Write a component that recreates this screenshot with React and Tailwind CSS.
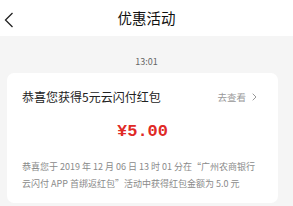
import React from 'react';

const cjk = { fontFamily: '"Noto Sans CJK SC", "Noto Sans", sans-serif' };

const App = () => {
  return (
    <div className="w-[293px] h-[206px] overflow-hidden bg-[#f5f5f5]" style={cjk}>
      {/* header */}
      <div className="relative h-9 bg-white flex items-center justify-center">
        <svg className="absolute left-[4px] top-[12px]" width="10" height="16" viewBox="0 0 10 16">
          <polyline points="8.5,1 1.5,8 8.5,15" fill="none" stroke="#222" strokeWidth="1.3" />
        </svg>
        <h1 className="text-[14.5px] leading-none text-[#111] pt-[1px]">优惠活动</h1>
      </div>

      <div className="pt-[19px] text-center text-[9px] leading-[14px] text-[#666]">13:01</div>

      <div className="ml-[7px] w-[271px] mt-[4px] bg-white rounded-[7px] px-[15px] pt-[16px] pb-[11px]">
        <div className="flex items-center justify-between h-4">
          <span className="text-[12px] leading-4 text-[#222]">恭喜您获得5元云闪付红包</span>
          <span className="flex items-center gap-[6px] text-[9.5px] text-[#999] pr-[6px]">
            去查看
            <svg width="5" height="8" viewBox="0 0 5 8">
              <polyline points="0.7,0.7 4,4 0.7,7.3" fill="none" stroke="#999" strokeWidth="1" />
            </svg>
          </span>
        </div>

        <div
          className="mt-[17px] text-center text-[17px] leading-5 font-bold text-[#e02a26]"
          style={{ fontFamily: '"Liberation Mono", monospace' }}
        >
          ¥5.00
        </div>

        <div className="mt-[16px] text-[9px] leading-[17px] text-[#8a8a8a]">
          <div className="whitespace-nowrap">恭喜您于 2019 年 12 月 06 日 13 时 01 分在“广州农商银行</div>
          <div className="whitespace-nowrap">云闪付 APP 首绑返红包”活动中获得红包金额为 5.0 元</div>
        </div>
      </div>
    </div>
  );
};

export default App;
